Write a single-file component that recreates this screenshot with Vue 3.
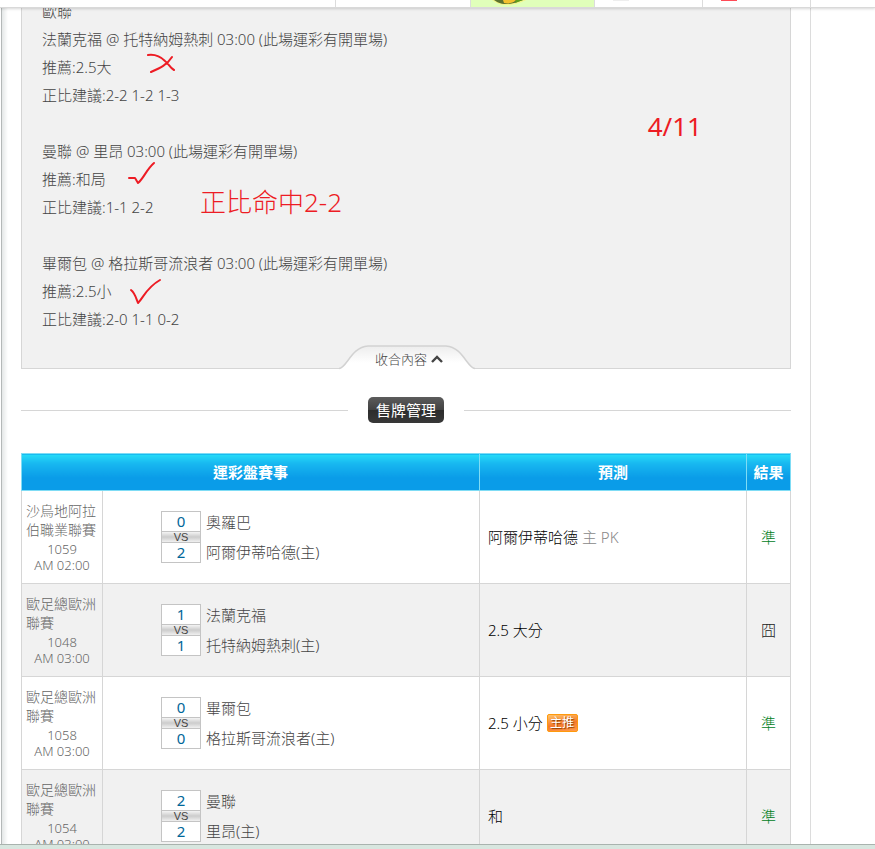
<template>
  <div class="page">
    <header class="topbar">
      <div class="topbar-item topbar-blank"></div>
      <div class="topbar-item topbar-wide"></div>
      <div class="topbar-item topbar-active">
        <svg class="fruit-icon" width="34" height="6" viewBox="0 0 34 6" aria-hidden="true">
          <path d="M0 0 H34 C30 2 24 5 14 5 C8 5 4 3 0 0Z" fill="#f4f58a" />
          <path d="M2 0 H31 C27 1 23 4 14 4 C8 4 5 2 2 0Z" fill="#5c7330" />
          <path d="M11 0 H24 C21 3 17 4 12 3Z" fill="#f3c02f" />
          <path d="M24 0 H31 L23 3Z" fill="#5f9f1c" />
        </svg>
      </div>
      <div class="topbar-item"><span class="mark mark-gray"></span></div>
      <div class="topbar-item"><span class="mark mark-red"></span></div>
      <div class="topbar-item topbar-end"></div>
    </header>

    <div class="content">
      <main class="main-column">
        <section class="article">
          <p>歐聯</p>
          <div v-for="tip in tips" :key="tip.title" class="tip">
            <p>{{ tip.title }}</p>
            <p>推薦:{{ tip.pick }}</p>
            <p>正比建議:{{ tip.scores }}</p>
          </div>

          <!-- 手寫註記 -->
          <svg class="note cross" width="30" height="22" viewBox="0 0 30 22" aria-hidden="true">
            <path d="M2 2 C9 1 15 4 19 8 C23 11 24 15 28 17 M26 4 C21 12 14 15 5 19" />
          </svg>
          <svg class="note check-first" width="30" height="26" viewBox="0 0 30 26" aria-hidden="true">
            <path d="M2 17 L8 17 L11 22 C17 17 19 9 27 2" />
          </svg>
          <svg class="note check-second" width="34" height="28" viewBox="0 0 34 28" aria-hidden="true">
            <path d="M2 12 C6 15 7 20 9 25 C15 19 17 10 31 2" />
          </svg>
          <span class="note note-date">4/11</span>
          <span class="note note-hit">正比命中2-2</span>

          <button type="button" class="collapse">
            <svg class="collapse-shape" width="136" height="26" viewBox="0 0 136 26" aria-hidden="true">
              <defs>
                <linearGradient id="tab-fill" x1="0" y1="0" x2="0" y2="1">
                  <stop offset="0" stop-color="#ededed" />
                  <stop offset="0.7" stop-color="#ffffff" />
                </linearGradient>
              </defs>
              <path d="M0 26 V24.5 C8 24 12 3 29 2 H107 C124 3 128 24 136 24.5 V26Z" fill="url(#tab-fill)" />
              <path
                d="M0 24.5 C8 24 12 3 29 2 H107 C124 3 128 24 136 24.5"
                fill="none"
                stroke="#d2d2d2"
                stroke-width="1.5"
              />
            </svg>
            <span class="collapse-text">收合內容</span>
            <svg class="arrow" width="12" height="8" viewBox="0 0 12 8" aria-hidden="true">
              <path d="M1 7 L6 2 L11 7" fill="none" stroke="#444" stroke-width="2.4" />
            </svg>
          </button>
        </section>

        <div class="divider">
          <button type="button" class="manage">售牌管理</button>
        </div>

        <table class="matches">
          <colgroup>
            <col class="col-league" />
            <col />
            <col class="col-pick" />
            <col class="col-result" />
          </colgroup>
          <thead>
            <tr>
              <th colspan="2">運彩盤賽事</th>
              <th>預測</th>
              <th>結果</th>
            </tr>
          </thead>
          <tbody>
            <tr v-for="match in matches" :key="match.id">
              <td class="league">
                <div class="league-name">{{ match.league }}</div>
                <div class="league-info">{{ match.id }}</div>
                <div class="league-info">{{ match.time }}</div>
              </td>
              <td>
                <div class="versus">
                  <div class="score">
                    <span class="score-num">{{ match.awayScore }}</span>
                    <span class="score-vs">VS</span>
                    <span class="score-num">{{ match.homeScore }}</span>
                  </div>
                  <div class="teams">
                    <span>{{ match.away }}</span>
                    <span>{{ match.home }}(主)</span>
                  </div>
                </div>
              </td>
              <td class="pick">
                {{ match.pick }}
                <span v-if="match.extra" class="extra">{{ match.extra }}</span>
                <span v-if="match.main" class="main-badge">主推</span>
              </td>
              <td class="result" :class="{ hit: match.result === '準' }">{{ match.result }}</td>
            </tr>
          </tbody>
        </table>
      </main>
      <aside class="side"></aside>
    </div>

    <footer class="bottom-strip"></footer>
  </div>
</template>

<script setup>
const tips = [
  { title: '法蘭克福 @ 托特納姆熱刺 03:00 (此場運彩有開單場)', pick: '2.5大', scores: '2-2 1-2 1-3' },
  { title: '曼聯 @ 里昂 03:00 (此場運彩有開單場)', pick: '和局', scores: '1-1 2-2' },
  { title: '畢爾包 @ 格拉斯哥流浪者 03:00 (此場運彩有開單場)', pick: '2.5小', scores: '2-0 1-1 0-2' }
]

const matches = [
  {
    id: 1059,
    league: '沙烏地阿拉伯職業聯賽',
    time: 'AM 02:00',
    away: '奧羅巴',
    awayScore: 0,
    home: '阿爾伊蒂哈德',
    homeScore: 2,
    pick: '阿爾伊蒂哈德',
    extra: '主 PK',
    result: '準'
  },
  {
    id: 1048,
    league: '歐足總歐洲聯賽',
    time: 'AM 03:00',
    away: '法蘭克福',
    awayScore: 1,
    home: '托特納姆熱刺',
    homeScore: 1,
    pick: '2.5 大分',
    result: '囧'
  },
  {
    id: 1058,
    league: '歐足總歐洲聯賽',
    time: 'AM 03:00',
    away: '畢爾包',
    awayScore: 0,
    home: '格拉斯哥流浪者',
    homeScore: 0,
    pick: '2.5 小分',
    main: true,
    result: '準'
  },
  {
    id: 1054,
    league: '歐足總歐洲聯賽',
    time: 'AM 03:00',
    away: '曼聯',
    awayScore: 2,
    home: '里昂',
    homeScore: 2,
    pick: '和',
    result: '準'
  }
]
</script>

<style>
body {
  margin: 0;
  background: #fff;
}
</style>

<style scoped>
.page {
  display: flex;
  flex-direction: column;
  height: 100vh;
  overflow: hidden;
  font-family: "Noto Sans", "Noto Sans CJK TC", sans-serif;
  font-size: 15px;
  font-weight: 300;
  color: #444;
}

button {
  font-family: inherit;
  font-weight: inherit;
  cursor: pointer;
}

/* 頂部選單 */
.topbar {
  position: relative;
  z-index: 1;
  flex: none;
  display: flex;
  height: 7px;
  background: #fff;
  border-bottom: 1px solid #d9d9d9;
  box-shadow: 0 1px 3px rgba(0, 0, 0, 0.16);
}

.topbar-item {
  box-sizing: border-box;
  width: 108px;
  border-left: 1px solid #dcdcdc;
}

.topbar-blank {
  flex: 1;
  border-left: 0;
}

.topbar-wide {
  width: 135px;
}

.topbar-active {
  width: 124px;
  padding-left: 21px;
  background: #e0ffba;
}

.topbar-end {
  width: 65px;
}

.fruit-icon {
  display: block;
}

.mark {
  display: block;
  width: 16px;
  height: 1px;
  margin-left: 18px;
}

.mark-gray {
  background: #eee;
}

.mark-red {
  background: #ff4b57;
}

/* 內容 */
.content {
  flex: 1;
  display: flex;
  min-height: 0;
  overflow: hidden;
}

.main-column {
  flex: 1;
  margin-left: 1px;
  padding: 0 19px;
  border-left: 1px solid #b4b8b8;
  background: linear-gradient(to right, #e4e7e7, #fff 6px);
}

.side {
  box-sizing: border-box;
  width: 65px;
  border-left: 1px solid #dcdcdc;
}

.article {
  position: relative;
  margin-top: -31px;
  padding: 20px 20px 35px;
  border: 1px solid #d6d6d6;
  border-top: 0;
  background: #f1f1f1;
}

.article p {
  margin: 0;
  line-height: 28px;
}

.tip + .tip {
  margin-top: 28px;
}

.note {
  position: absolute;
  color: #ed1c24;
  font-size: 26px;
  line-height: 36px;
}

.note path {
  fill: none;
  stroke: #ed1c24;
  stroke-width: 2;
  stroke-linecap: round;
  stroke-linejoin: round;
}

.cross {
  left: 124px;
  top: 76px;
}

.check-first {
  left: 105px;
  top: 184px;
}

.check-second {
  left: 107px;
  top: 301px;
}

.note-date {
  right: 88px;
  top: 131px;
  font-weight: 400;
}

.note-hit {
  left: 178px;
  top: 207px;
}

.collapse {
  position: absolute;
  left: 50%;
  bottom: -2px;
  display: flex;
  align-items: center;
  justify-content: center;
  gap: 4px;
  width: 136px;
  height: 26px;
  margin-left: -67px;
  padding: 4px 0 0 4px;
  border: 0;
  background: none;
  color: #444;
  font-size: 13px;
  line-height: 20px;
}

.collapse-shape {
  position: absolute;
  left: 0;
  top: 0;
}

.collapse-text,
.arrow {
  position: relative;
}

.divider {
  display: flex;
  align-items: center;
  gap: 20px;
  margin: 28px 0 30px;
}

.divider::before,
.divider::after {
  content: "";
  flex: 1;
  height: 1px;
  background: #d6d6d6;
}

.manage {
  padding: 0 8px;
  border: 0;
  border-radius: 5px;
  background: linear-gradient(#5c5c5c, #414141 50%, #2c2c2c 50%, #383838);
  color: #fff;
  font-size: 15px;
  font-weight: 400;
  line-height: 26px;
}

/* 賽事表格 */
.matches {
  width: 100%;
  table-layout: fixed;
  border-collapse: collapse;
}

.col-league {
  width: 81px;
}

.col-pick {
  width: 267px;
}

.col-result {
  width: 44px;
}

.matches th {
  box-sizing: border-box;
  height: 37px;
  padding: 0 0 2px;
  border: 1px solid #7fdcf5;
  background: linear-gradient(#26dcf8, #18b8f0 25%, #0a9ce8 65%, #0a9ce8);
  color: #fff;
  font-size: 15px;
  font-weight: 700;
}

.matches td {
  box-sizing: border-box;
  height: 93px;
  padding: 0;
  border: 1px solid #d6d6d6;
}

.matches tbody tr:nth-child(even) {
  background: #f1f1f1;
}

.matches .league {
  padding: 0 4px;
  color: #666;
}

.league-name {
  margin-bottom: 2px;
  font-size: 14px;
  line-height: 19px;
}

.league-info {
  font-size: 13px;
  line-height: 16px;
  text-align: center;
}

.versus {
  display: flex;
  gap: 5px;
  padding-left: 58px;
}

.score {
  display: flex;
  flex-direction: column;
  width: 38px;
  border: 1px solid #c4c4c4;
  background: #fff;
  text-align: center;
}

.score-num {
  color: #069;
  font-weight: 400;
  line-height: 19px;
}

.score-vs {
  border: solid #c4c4c4;
  border-width: 1px 0;
  background: linear-gradient(#f4f4f4, #ccc 50%, #f0f0f0);
  color: #444;
  font-family: "Liberation Sans", sans-serif;
  font-size: 11px;
  line-height: 10px;
}

.teams {
  display: flex;
  flex-direction: column;
  gap: 8px;
  line-height: 22px;
}

.matches .pick {
  padding: 0 8px 2px;
  color: #000;
}

.extra {
  color: #888;
}

.main-badge {
  display: inline-block;
  box-sizing: border-box;
  width: 31px;
  border: 1px solid #ff9a0c;
  border-radius: 2px;
  background: linear-gradient(170deg, #ffc36b, #f47b2c 55%, #ff9c4d);
  color: #fff;
  font-size: 12px;
  font-weight: 400;
  line-height: 16px;
  text-align: center;
  text-shadow: 1px 1px 1px #8a3b00;
  vertical-align: 2px;
}

.matches .result {
  padding-bottom: 2px;
  color: #222;
  text-align: center;
}

.matches .hit {
  color: #00801c;
}

.bottom-strip {
  flex: none;
  height: 4px;
  border-top: 1px solid #a9b3ae;
  background: #d8e6df;
}
</style>
